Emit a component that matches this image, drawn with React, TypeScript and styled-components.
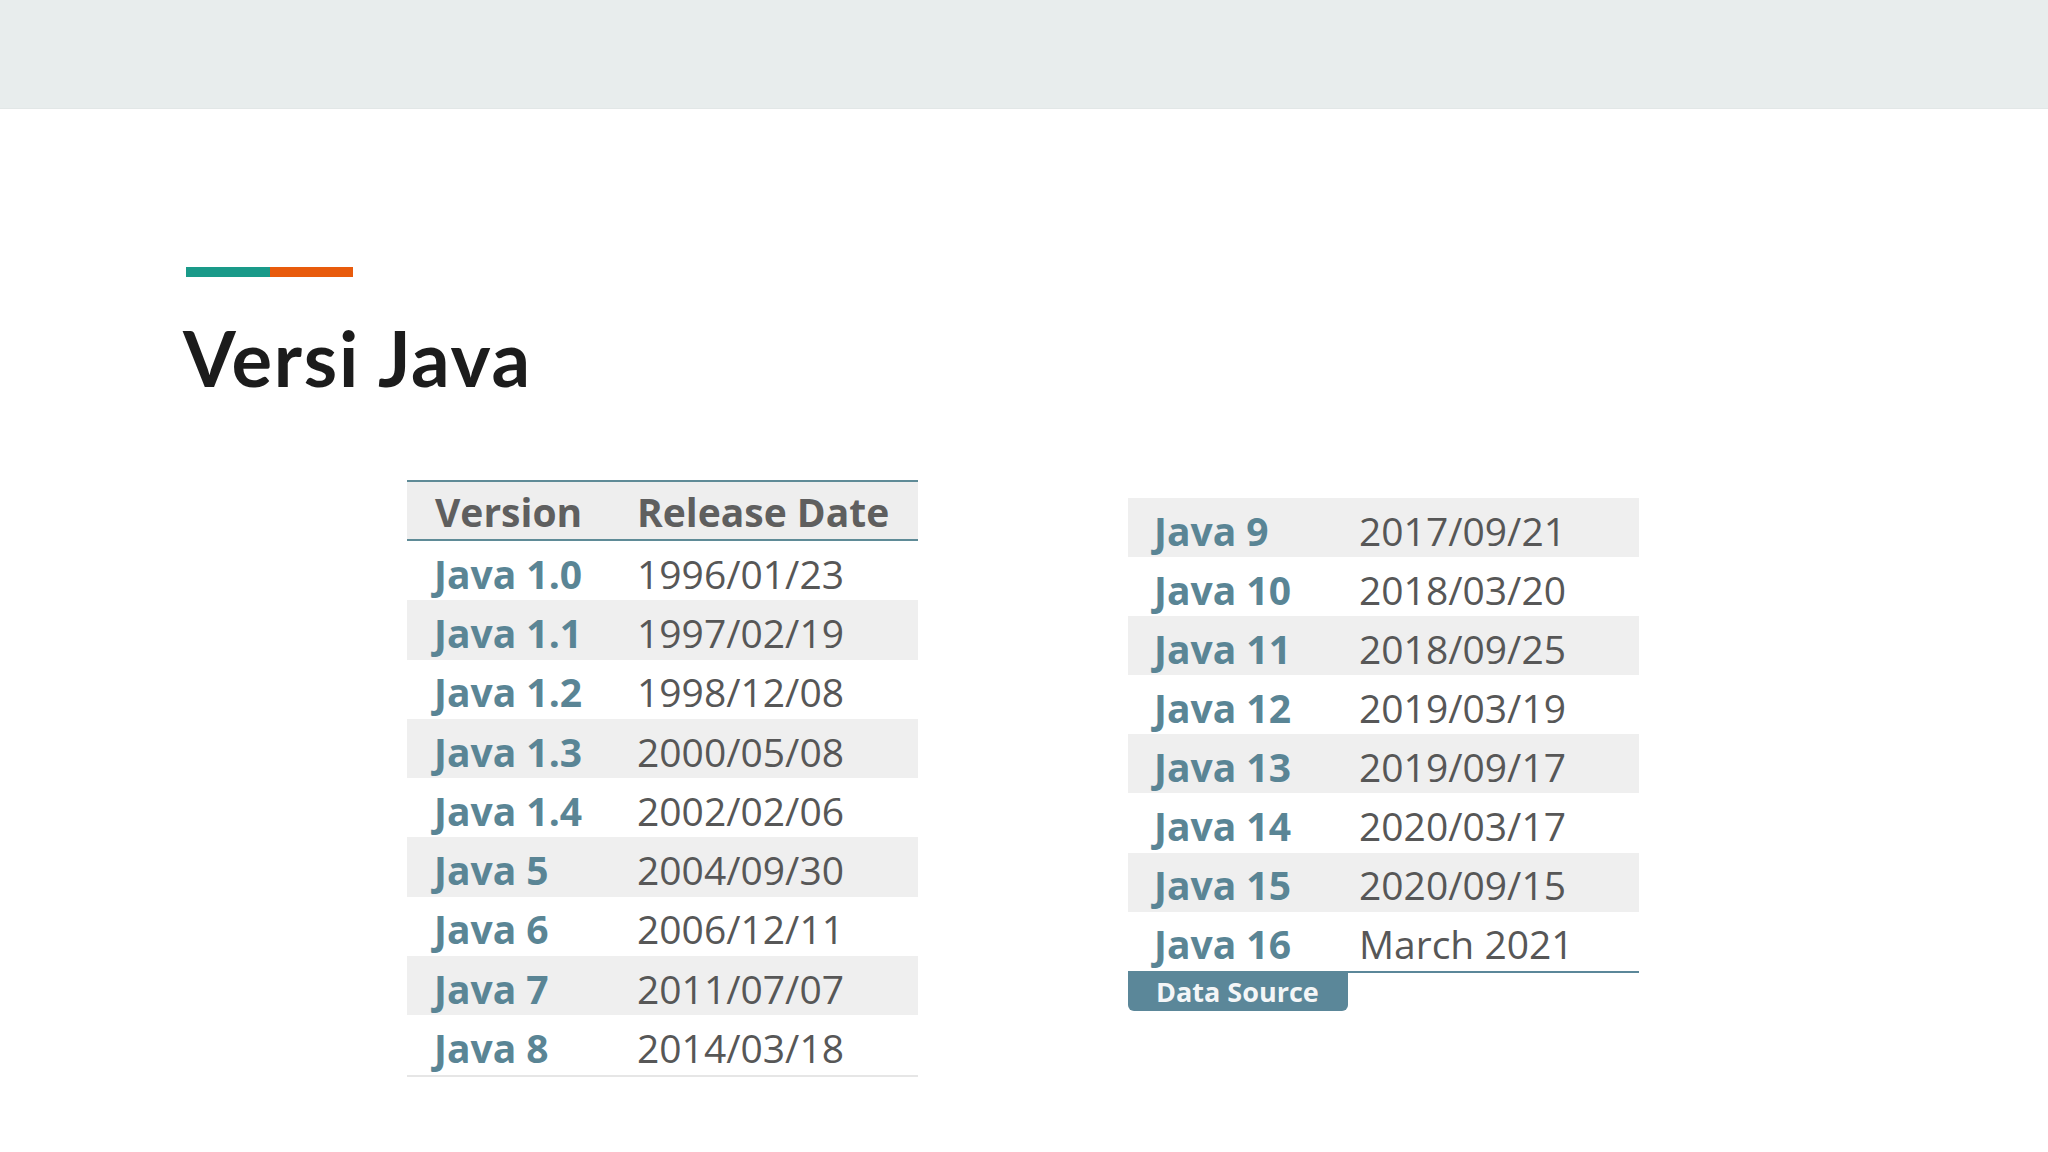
import React from "react";
import styled, { createGlobalStyle } from "styled-components";

const Global = createGlobalStyle`
  html, body { margin: 0; padding: 0; background: #ffffff; }
  body { width: 2048px; height: 1152px; overflow: hidden; font-family: "Open Sans", "DejaVu Sans", sans-serif; }
`;

const Page = styled.div`
  width: 2048px;
  height: 1152px;
  background: #ffffff;
  display: flex;
  flex-direction: column;
`;

const TopBar = styled.header`
  height: 108px;
  background: #e8eded;
  border-bottom: 1px solid #e2e7e7;
  flex-shrink: 0;
`;

const Main = styled.main`
  padding: 158px 0 0 185px;
  display: flex;
  flex-direction: column;
`;

const Accent = styled.div`
  display: flex;
  width: 167px;
  height: 10px;
  margin-left: 1px;
`;

const AccentPart = styled.span<{ $color: string }>`
  flex: 1;
  background: ${(p) => p.$color};
`;

const Title = styled.h1`
  margin: 43px 0 0 -2px;
  font-family: "Lato", "Open Sans", sans-serif;
  font-weight: 700;
  font-size: 76px;
  line-height: 76px;
  color: #1c1c1c;
  letter-spacing: 1.75px;
`;

const Tables = styled.div`
  display: flex;
  align-items: flex-start;
  gap: 210px;
  margin: 84px 0 0 222px;
`;

const Table = styled.div<{ $offset?: number }>`
  width: 511px;
  display: flex;
  flex-direction: column;
  margin-top: ${(p) => p.$offset ?? 0}px;
`;

const HeaderRow = styled.div`
  display: grid;
  grid-template-columns: 230px 1fr;
  height: 57px;
  align-items: center;
  background: #eeeeee;
  border-top: 2px solid #5f8b97;
  border-bottom: 2px solid #5f8b97;
`;

const HeaderCell = styled.div<{ $first?: boolean }>`
  padding-left: ${(p) => (p.$first ? 28 : 0)}px;
  font-weight: 700;
  font-size: 39px;
  color: #5f5f5f;
  line-height: 1;
  padding-top: 2px;
`;

const Row = styled.div<{ $striped: boolean; $cols: string; $h: number }>`
  display: grid;
  grid-template-columns: ${(p) => p.$cols};
  height: ${(p) => p.$h}px;
  align-items: center;
  background: ${(p) => (p.$striped ? "#efefef" : "#ffffff")};
`;

const NameCell = styled.div<{ $pad: number }>`
  padding-left: ${(p) => p.$pad}px;
  font-weight: 700;
  font-size: 39px;
  line-height: 1;
  padding-top: 5px;
  color: #5a8595;
`;

const DateCell = styled.div`
  font-weight: 400;
  font-size: 39px;
  line-height: 1;
  padding-top: 5px;
  color: #575757;
`;

const EndRule = styled.div<{ $color: string; $h: number }>`
  height: ${(p) => p.$h}px;
  background: ${(p) => p.$color};
`;

const Badge = styled.div`
  width: 220px;
  height: 38px;
  box-sizing: border-box;
  padding-left: 28px;
  background: #5b8799;
  border-radius: 0 0 6px 6px;
  color: #f4f6f7;
  font-weight: 700;
  font-size: 27px;
  line-height: 38px;
`;

const left: [string, string][] = [
  ["Java 1.0", "1996/01/23"],
  ["Java 1.1", "1997/02/19"],
  ["Java 1.2", "1998/12/08"],
  ["Java 1.3", "2000/05/08"],
  ["Java 1.4", "2002/02/06"],
  ["Java 5", "2004/09/30"],
  ["Java 6", "2006/12/11"],
  ["Java 7", "2011/07/07"],
  ["Java 8", "2014/03/18"],
];

const right: [string, string][] = [
  ["Java 9", "2017/09/21"],
  ["Java 10", "2018/03/20"],
  ["Java 11", "2018/09/25"],
  ["Java 12", "2019/03/19"],
  ["Java 13", "2019/09/17"],
  ["Java 14", "2020/03/17"],
  ["Java 15", "2020/09/15"],
  ["Java 16", "March 2021"],
];

export default function App() {
  return (
    <Page>
      <Global />
      <TopBar />
      <Main>
        <Accent>
          <AccentPart $color="#1a9a89" />
          <AccentPart $color="#e85b0c" />
        </Accent>
        <Title>Versi Java</Title>
        <Tables>
          <Table>
            <HeaderRow>
              <HeaderCell $first>Version</HeaderCell>
              <HeaderCell>Release Date</HeaderCell>
            </HeaderRow>
            {left.map(([n, d], i) => (
              <Row key={n} $striped={i % 2 === 1} $cols="230px 1fr" $h={59.3}>
                <NameCell $pad={27}>{n}</NameCell>
                <DateCell>{d}</DateCell>
              </Row>
            ))}
            <EndRule $color="#e6e6e6" $h={2} />
          </Table>
          <Table $offset={18}>
            {right.map(([n, d], i) => (
              <Row key={n} $striped={i % 2 === 0} $cols="231px 1fr" $h={59.1}>
                <NameCell $pad={26}>{n}</NameCell>
                <DateCell>{d}</DateCell>
              </Row>
            ))}
            <EndRule $color="#5b8799" $h={2} />
            <Badge>Data Source</Badge>
          </Table>
        </Tables>
      </Main>
    </Page>
  );
}
